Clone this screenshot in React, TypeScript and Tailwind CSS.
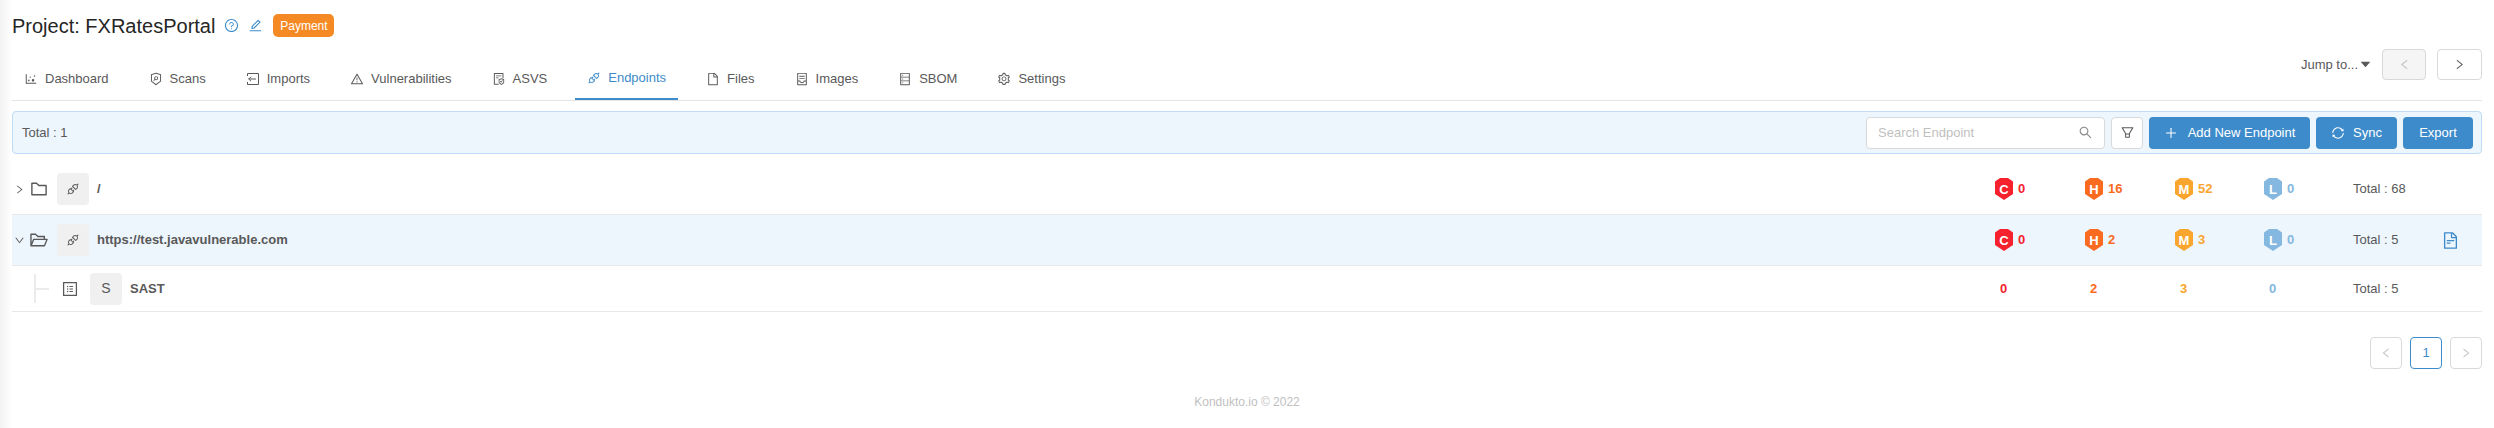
import type { ReactNode } from 'react'
import {
  AiFillCaretDown,
  AiOutlineApi,
  AiOutlineContainer,
  AiOutlineDatabase,
  AiOutlineDotChart,
  AiOutlineDown,
  AiOutlineEdit,
  AiOutlineFile,
  AiOutlineFileProtect,
  AiOutlineFileText,
  AiOutlineFilter,
  AiOutlineFolder,
  AiOutlineFolderOpen,
  AiOutlineLeft,
  AiOutlinePlus,
  AiOutlineProfile,
  AiOutlineQuestionCircle,
  AiOutlineRight,
  AiOutlineSearch,
  AiOutlineSecurityScan,
  AiOutlineSetting,
  AiOutlineSync,
  AiOutlineWarning,
} from 'react-icons/ai'

const ImportIcon = () => (
  <svg viewBox="0 0 14 14" className="h-[14px] w-[14px]" fill="none" stroke="currentColor" strokeWidth="1">
    <path d="M1.5 4V1.5h11v11h-11V10M10 7H2.5M5 4.8 2.8 7 5 9.2" />
  </svg>
)

const tabs = [
  { label: 'Dashboard', icon: <AiOutlineDotChart /> },
  { label: 'Scans', icon: <AiOutlineSecurityScan /> },
  { label: 'Imports', icon: <ImportIcon /> },
  { label: 'Vulnerabilities', icon: <AiOutlineWarning /> },
  { label: 'ASVS', icon: <AiOutlineFileProtect /> },
  { label: 'Endpoints', icon: <AiOutlineApi />, active: true },
  { label: 'Files', icon: <AiOutlineFile /> },
  { label: 'Images', icon: <AiOutlineContainer /> },
  { label: 'SBOM', icon: <AiOutlineDatabase /> },
  { label: 'Settings', icon: <AiOutlineSetting /> },
]

const Shield = ({ letter, color }: { letter: string; color: string }) => (
  <span className="relative flex h-[22px] w-[18px] items-center justify-center">
    <svg viewBox="0 0 18 22" className="absolute inset-0 h-full w-full">
      <path d="M5 0 H13 L18 3.5 V16 L9 22 L0 16 V3.5 Z" fill={color} />
    </svg>
    <span className="relative text-[13px] font-bold leading-none text-white">{letter}</span>
  </span>
)

const Sev = ({ letter, color, value }: { letter: string; color: string; value: number }) => (
  <div className="flex items-center gap-[5px]">
    <Shield letter={letter} color={color} />
    <span className="text-[13px] font-bold" style={{ color }}>
      {value}
    </span>
  </div>
)

const severities = [
  { letter: 'C', color: '#f5222d' },
  { letter: 'H', color: '#fa6a1f' },
  { letter: 'M', color: '#faa52d' },
  { letter: 'L', color: '#85b8e0' },
]

const rowGrid = 'grid grid-cols-[90px_90px_89px_89px_88px_1fr] items-center'

const Tile = ({ children }: { children: ReactNode }) => (
  <div className="flex h-8 w-8 items-center justify-center rounded bg-[#f0f0f0] text-[14px] text-[#595959]">
    {children}
  </div>
)

const EndpointRow = ({
  open,
  name,
  counts,
  total,
}: {
  open?: boolean
  name: string
  counts: number[]
  total: number
}) => (
  <div
    className={`flex h-[51px] items-center border-b border-[#e8e8e8] pr-[10px] ${open ? 'bg-[#edf5fd]' : ''}`}
  >
    <span className="ml-[2px] flex w-[15px] text-[11px] text-[#595959]">
      {open ? <AiOutlineDown /> : <AiOutlineRight />}
    </span>
    <span className="flex w-[26px] text-[20px] text-[#595959]">{open ? <AiOutlineFolderOpen /> : <AiOutlineFolder />}</span>
    <span className="ml-[2px]">
      <Tile>
        <AiOutlineApi />
      </Tile>
    </span>
    <span className="ml-[8px] flex-1 text-[13px] font-bold text-[#595959]">{name}</span>
    <div className={`${rowGrid} w-[477px]`}>
      {severities.map((s, i) => (
        <Sev key={s.letter} letter={s.letter} color={s.color} value={counts[i]} />
      ))}
      <span className="text-[13px] text-[#595959]">Total : {total}</span>
      {open && <AiOutlineFileText className="text-[19px] text-[#3d8bca]" />}
    </div>
  </div>
)

export default function App() {
  return (
    <div className="flex h-[428px] w-[2494px] overflow-hidden bg-white font-['Liberation_Sans',Arial,sans-serif]">
      <div className="w-[12px] shrink-0 bg-gradient-to-r from-[#f2f2f2] to-white" />
      <div className="w-[2470px] shrink-0">
        <div className="flex h-[49px] items-center pt-[2px]">
          <h1 className="text-[20px] leading-none text-[#262626]">Project: FXRatesPortal</h1>
          <AiOutlineQuestionCircle className="ml-[9px] text-[15px] text-[#3d8bca]" />
          <AiOutlineEdit className="ml-[9px] text-[15px] text-[#3d8bca]" />
          <span className="ml-[10px] flex h-[23px] w-[61px] items-center justify-center rounded-[5px] bg-[#f58a25] text-[12px] text-white">
            Payment
          </span>
        </div>
        <div className="flex h-[52px] items-end justify-between border-b border-[#e5e5e5]">
          <div className="flex">
            {tabs.map(t => (
              <div
                key={t.label}
                className={`mr-[16px] flex h-[37px] items-center gap-[7px] px-[12px] pb-[6px] text-[13px] ${
                  t.active ? 'border-b-2 border-[#3d8bca] text-[#3d8bca]' : 'text-[#595959]'
                }`}
              >
                <span className="text-[14px]">{t.icon}</span>
                <span>{t.label}</span>
              </div>
            ))}
          </div>
          <div className="mb-[20px] flex items-center">
            <span className="text-[13px] text-[#595959]">Jump to...</span>
            <AiFillCaretDown className="ml-[1px] text-[13px] text-[#595959]" />
            <span className="ml-[10px] flex h-[31px] w-[44px] items-center justify-center rounded border border-[#d9d9d9] bg-[#f5f5f5] text-[13px] text-[#bfbfbf]">
              <AiOutlineLeft />
            </span>
            <span className="ml-[11px] flex h-[31px] w-[45px] items-center justify-center rounded border border-[#d9d9d9] text-[13px] text-[#595959]">
              <AiOutlineRight />
            </span>
          </div>
        </div>
        <div className="mt-[10px] flex h-[43px] items-center justify-between rounded border border-[#bfdcf7] bg-[#edf5fd] pl-[9px] pr-[8px]">
          <span className="text-[13px] text-[#595959]">Total : 1</span>
          <div className="flex items-center gap-[6px]">
            <div className="flex h-[32px] w-[239px] items-center justify-between rounded border border-[#d9d9d9] bg-white px-[11px] text-[13px] text-[#bfbfbf]">
              <span>Search Endpoint</span>
              <AiOutlineSearch className="text-[15px] text-[#8c8c8c]" />
            </div>
            <div className="flex h-[32px] w-[32px] items-center justify-center rounded border border-[#d9d9d9] bg-white text-[15px] text-[#595959]">
              <AiOutlineFilter />
            </div>
            <div className="flex h-[32px] w-[161px] items-center justify-center gap-[10px] rounded bg-[#3d8bca] text-[13px] text-white">
              <AiOutlinePlus className="text-[14px]" />
              Add New Endpoint
            </div>
            <div className="flex h-[32px] w-[81px] items-center justify-center gap-[8px] rounded bg-[#3d8bca] text-[13px] text-white">
              <AiOutlineSync className="text-[14px]" />
              Sync
            </div>
            <div className="flex h-[32px] w-[70px] items-center justify-center rounded bg-[#3d8bca] text-[13px] text-white">
              Export
            </div>
          </div>
        </div>
        <div className="mt-[10px]">
          <EndpointRow name="/" counts={[0, 16, 52, 0]} total={68} />
          <EndpointRow open name="https://test.javavulnerable.com" counts={[0, 2, 3, 0]} total={5} />
          <div className="flex h-[46px] items-center border-b border-[#e8e8e8] pr-[10px]">
            <span className="ml-[22px] flex h-[29px] w-[15px] items-center border-l-2 border-[#ebebeb]">
              <span className="h-[2px] w-[13px] bg-[#ebebeb]" />
            </span>
            <AiOutlineProfile className="ml-[12px] text-[18px] text-[#595959]" />
            <span className="ml-[11px]">
              <Tile>S</Tile>
            </span>
            <span className="ml-[8px] flex-1 text-[13px] font-bold text-[#595959]">SAST</span>
            <div className={`${rowGrid} w-[477px]`}>
              {severities.map((s, i) => (
                <span key={s.letter} className="pl-[5px] text-[13px] font-bold" style={{ color: s.color }}>
                  {[0, 2, 3, 0][i]}
                </span>
              ))}
              <span className="text-[13px] text-[#595959]">Total : 5</span>
            </div>
          </div>
        </div>
        <div className="mt-[25px] flex justify-end gap-[8px]">
          <span className="flex h-[32px] w-[32px] items-center justify-center rounded border border-[#d9d9d9] text-[12px] text-[#bfbfbf]">
            <AiOutlineLeft />
          </span>
          <span className="flex h-[32px] w-[32px] items-center justify-center rounded border border-[#3d8bca] text-[13px] text-[#3d8bca]">
            1
          </span>
          <span className="flex h-[32px] w-[32px] items-center justify-center rounded border border-[#d9d9d9] text-[12px] text-[#bfbfbf]">
            <AiOutlineRight />
          </span>
        </div>
        <div className="mt-[24px] text-center text-[12px] text-[#bfbfbf]">Kondukto.io © 2022</div>
      </div>
    </div>
  )
}
